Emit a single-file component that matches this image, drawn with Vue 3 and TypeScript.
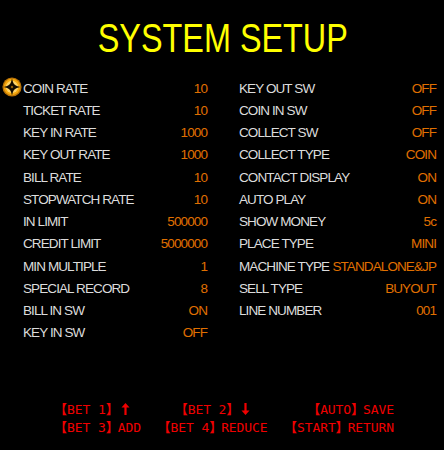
<template>
  <div class="screen">
    <h1 class="title">SYSTEM SETUP</h1>
    <div class="columns">
      <ul class="list left">
        <li v-for="(row, i) in leftRows" :key="row[0]" class="row">
          <svg v-if="i === 0" class="coin" viewBox="0 0 24 24">
            <circle cx="12" cy="12" r="11.5" fill="#b87206" />
            <circle cx="12" cy="12" r="9.8" fill="#f6a80e" />
            <circle cx="12" cy="12" r="7.4" fill="#ffd468" />
            <path d="M12 5.6C12.8 8.5 15.5 11.2 18.4 12 15.5 12.8 12.8 15.5 12 18.4 11.2 15.5 8.5 12.8 5.6 12 8.5 11.2 11.2 8.5 12 5.6Z" fill="#120a00" stroke="#120a00" stroke-width="2" />
            <circle cx="12" cy="12" r="1.5" fill="#8a5a08" />
          </svg>
          <span class="label">{{ row[0] }}</span>
          <span class="value">{{ row[1] }}</span>
        </li>
      </ul>
      <ul class="list right">
        <li v-for="row in rightRows" :key="row[0]" class="row">
          <span class="label">{{ row[0] }}</span>
          <span class="value">{{ row[1] }}</span>
        </li>
      </ul>
    </div>
    <div class="help">
      <span v-for="(item, i) in helpItems" :key="item.key" :class="'cell-' + (i % 3)">
        <span class="open">【</span>{{ item.key }}<span class="close">】</span>
        <svg v-if="item.arrow" class="arrow" :class="item.arrow" viewBox="0 0 9 12">
          <path d="M4.5 0 8.5 4.5H5.6V12H3.4V4.5H.5Z" fill="#f00000" />
        </svg>
        <template v-else>{{ item.action }}</template>
      </span>
    </div>
  </div>
</template>

<script setup lang="ts">
interface HelpItem {
  key: string
  action?: string
  arrow?: 'up' | 'down'
}

const leftRows: [string, string][] = [
  ['COIN RATE', '10'],
  ['TICKET RATE', '10'],
  ['KEY IN RATE', '1000'],
  ['KEY OUT RATE', '1000'],
  ['BILL RATE', '10'],
  ['STOPWATCH RATE', '10'],
  ['IN LIMIT', '500000'],
  ['CREDIT LIMIT', '5000000'],
  ['MIN MULTIPLE', '1'],
  ['SPECIAL RECORD', '8'],
  ['BILL IN SW', 'ON'],
  ['KEY IN SW', 'OFF'],
]

const rightRows: [string, string][] = [
  ['KEY OUT SW', 'OFF'],
  ['COIN IN SW', 'OFF'],
  ['COLLECT SW', 'OFF'],
  ['COLLECT TYPE', 'COIN'],
  ['CONTACT DISPLAY', 'ON'],
  ['AUTO PLAY', 'ON'],
  ['SHOW MONEY', '5c'],
  ['PLACE TYPE', 'MINI'],
  ['MACHINE TYPE', 'STANDALONE&JP'],
  ['SELL TYPE', 'BUYOUT'],
  ['LINE NUMBER', '001'],
]

const helpItems: HelpItem[] = [
  { key: 'BET 1', arrow: 'up' },
  { key: 'BET 2', arrow: 'down' },
  { key: 'AUTO', action: 'SAVE' },
  { key: 'BET 3', action: 'ADD' },
  { key: 'BET 4', action: 'REDUCE' },
  { key: 'START', action: 'RETURN' },
]
</script>

<style>
html,
body {
  margin: 0;
  background: #000;
}
</style>

<style scoped>
.screen {
  width: 444px;
  height: 450px;
  overflow: hidden;
  background: #000;
  font-family: 'Liberation Sans', Arial, sans-serif;
  display: flex;
  flex-direction: column;
}
.title {
  margin: 15px 0 0;
  padding-left: 2px;
  height: 47px;
  font-size: 41px;
  line-height: 47px;
  font-weight: 400;
  color: #ffff00;
  text-align: center;
  transform: scaleX(0.79);
  white-space: nowrap;
}
.columns {
  display: flex;
  margin-top: 15.5px;
}
.list {
  list-style: none;
  margin: 0;
  padding: 0;
  box-sizing: border-box;
}
.left {
  width: 207px;
  padding-left: 23px;
}
.right {
  width: 197px;
  margin-left: 32px;
}
.row {
  position: relative;
  display: flex;
  justify-content: space-between;
  height: 22.27px;
  line-height: 22px;
  font-size: 13.5px;
  white-space: nowrap;
}
.label {
  color: #dcdcdc;
  letter-spacing: -0.9px;
}
.value {
  color: #e07000;
  letter-spacing: -0.9px;
}
.coin {
  position: absolute;
  left: -21px;
  top: -1px;
  width: 20px;
  height: 20px;
}
.help {
  margin: 55px 50px 0 55px;
  display: grid;
  grid-template-columns: 97px 122px 120px;
  grid-auto-rows: 18px;
  font-family: 'DejaVu Sans Mono', 'Noto Sans CJK SC', monospace;
  font-size: 13px;
  letter-spacing: -0.1px;
  line-height: 18px;
  color: #f00000;
  white-space: nowrap;
}
.open,
.close {
  font-family: 'Noto Sans CJK SC', sans-serif;
  font-size: 13px;
  font-weight: 700;
  letter-spacing: 0;
}
.open {
  margin-left: -1px;
}
.close {
  letter-spacing: -1px;
}
.arrow {
  width: 9px;
  height: 12px;
  margin-left: 3px;
  vertical-align: -1px;
}
.arrow.down {
  transform: rotate(180deg);
}
.cell-1 {
  text-align: center;
}
.cell-2 {
  text-align: right;
}
</style>
